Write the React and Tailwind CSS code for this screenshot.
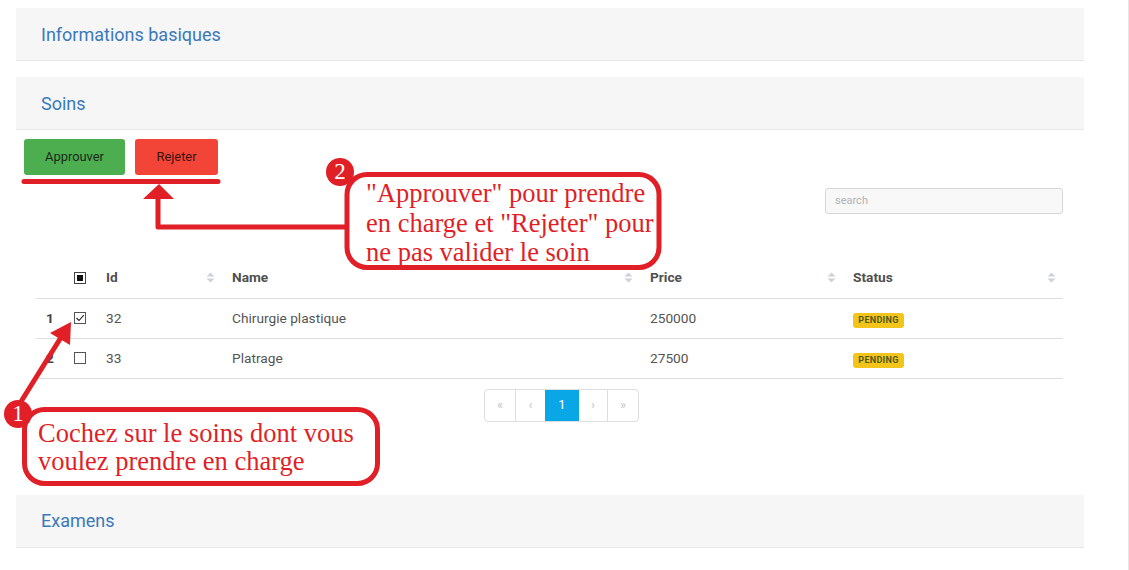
import React from "react";

const RED = "#e01f27";

function Sort() {
  return (
    <svg width="9" height="11" viewBox="0 0 9 11" className="shrink-0">
      <path d="M4.5 0.5 L8.5 4.5 L0.5 4.5 Z" fill="#cfd1da" />
      <path d="M4.5 10.5 L8.5 6.5 L0.5 6.5 Z" fill="#cfd1da" />
    </svg>
  );
}

function Panel({ title, className = "" }) {
  return (
    <div
      className={`h-[53px] bg-[#f6f6f6] border-b border-[#e8e8e8] flex items-center pl-[25px] text-[18px] text-[#3a79ba] ${className}`}
    >
      {title}
    </div>
  );
}

function Badge() {
  return (
    <span className="inline-flex items-center justify-center h-[15px] w-[51px] rounded-[3px] bg-[#f3c51a] text-[9px] font-bold tracking-[0.3px] text-[#4f5a1e]">
      PENDING
    </span>
  );
}

function HeadCell({ label, width, sort = true }) {
  return (
    <th className={`${width} p-0 font-bold text-left`}>
      <div className="flex items-center justify-between pl-[10px] pr-[7px]">
        <span>{label}</span>
        {sort && <Sort />}
      </div>
    </th>
  );
}

export default function App() {
  const rows = [
    { n: "1", id: "32", name: "Chirurgie plastique", price: "250000", checked: true },
    { n: "2", id: "33", name: "Platrage", price: "27500", checked: false },
  ];
  return (
    <div className="relative w-[1129px] h-[570px] bg-white border-r border-[#e6e6e6] overflow-hidden font-['Roboto',sans-serif]">
      <div className="pl-4 pt-2 w-[1084px]">
        <Panel title="Informations basiques" />
        <Panel title="Soins" className="mt-4" />
        <div className="pt-[9px]">
          <div className="flex gap-[10px] pl-2">
            <button className="h-[36px] w-[101px] rounded-[3px] bg-[#4cae4f] text-[12.9px] text-[#1b2a1b]">
              Approuver
            </button>
            <button className="h-[36px] w-[83px] rounded-[3px] bg-[#f24437] text-[12.9px] text-[#3a1411]">
              Rejeter
            </button>
          </div>
          <div className="pl-[20px] pr-[21px]">
            <div className="flex justify-end mt-[13px]">
              <div className="w-[238px] h-[26px] rounded-[3px] border border-[#d5d6d8] bg-[#f8f8f9] flex items-center pl-[9px] pt-[1px] text-[11px] text-[#b3b3b3]">
                search
              </div>
            </div>
            <table className="table-fixed border-collapse w-[1027px] mt-[44px] text-[13.7px] text-[#555]">
              <thead>
                <tr className="h-[40px] border-b border-[#dddddd] text-[#505050]">
                  <th className="w-[30px] p-0"></th>
                  <th className="w-[30px] p-0 text-left">
                    <div className="pl-[8px]">
                      <div className="w-[12px] h-[12px] border border-[#444] flex items-center justify-center">
                        <div className="w-[6px] h-[6px] bg-[#111]" />
                      </div>
                    </div>
                  </th>
                  <HeadCell label="Id" width="w-[126px]" />
                  <HeadCell label="Name" width="w-[418px]" />
                  <HeadCell label="Price" width="w-[203px]" />
                  <HeadCell label="Status" width="w-[220px]" />
                </tr>
              </thead>
              <tbody>
                {rows.map((r) => (
                  <tr key={r.id} className="h-[40px] border-b border-[#dddddd]">
                    <td className="p-0 pl-[10px] font-bold text-[#444]">{r.n}</td>
                    <td className="p-0 pl-[8px]">
                      <div className="w-[12px] h-[12px] border border-[#555] flex items-center justify-center">
                        {r.checked && (
                          <svg width="10" height="10" viewBox="0 0 10 10">
                            <path d="M1.5 5 L4 7.5 L8.8 2.2" fill="none" stroke="#222" strokeWidth="1.1" />
                          </svg>
                        )}
                      </div>
                    </td>
                    <td className="p-0 pl-[10px]">{r.id}</td>
                    <td className="p-0 pl-[10px]">{r.name}</td>
                    <td className="p-0 pl-[10px]">{r.price}</td>
                    <td className="p-0 pl-[10px]">
                      <Badge />
                    </td>
                  </tr>
                ))}
              </tbody>
            </table>
          </div>
          <div className="flex justify-center pl-[23px] mt-[10px]">
            <div className="flex h-[33px] border border-[#dedede] rounded-[4px] overflow-hidden text-[13px] text-[#c4c4c4]">
              <div className="w-[31px] flex items-center justify-center border-r border-[#dedede]">«</div>
              <div className="w-[29px] flex items-center justify-center">‹</div>
              <div className="w-[34px] flex items-center justify-center bg-[#0aa7e6] text-white">1</div>
              <div className="w-[29px] flex items-center justify-center border-r border-[#dedede]">›</div>
              <div className="w-[30px] flex items-center justify-center">»</div>
            </div>
          </div>
        </div>
        <Panel title="Examens" className="mt-[73px]" />
      </div>

      {/* Annotation overlay */}
      <svg
        className="absolute left-0 top-0 pointer-events-none"
        width="1129"
        height="570"
        viewBox="0 0 1129 570"
      >
        <line x1="24" y1="181.5" x2="218" y2="181.5" stroke={RED} strokeWidth="5" strokeLinecap="round" />
        <polyline points="345,227 158,227 158,197" fill="none" stroke={RED} strokeWidth="5" strokeLinejoin="round" />
        <polygon points="143,199 159,184 174,199" fill={RED} />
        <rect x="347" y="174.5" width="312" height="93" rx="20" fill="none" stroke={RED} strokeWidth="5" />
        <circle cx="340" cy="172" r="14" fill={RED} />
        <line x1="22" y1="400" x2="60" y2="339" stroke={RED} strokeWidth="5" strokeLinecap="round" />
        <polygon points="50,333 71,322 70,345" fill={RED} />
        <rect x="24.5" y="409.5" width="353" height="74" rx="20" fill="none" stroke={RED} strokeWidth="5" />
        <circle cx="18" cy="414" r="14" fill={RED} />
      </svg>
      <div className="absolute left-[330px] top-[157px] w-[20px] h-[30px] text-center text-white text-[23px] leading-[30px] font-['Liberation_Serif',serif]">
        2
      </div>
      <div className="absolute left-[8px] top-[399px] w-[20px] h-[30px] text-center text-white text-[23px] leading-[30px] font-['Liberation_Serif',serif]">
        1
      </div>
      <div
        className="absolute left-[366px] top-[179px] text-[26.5px] leading-[29.5px] whitespace-nowrap font-['Liberation_Serif',serif]"
        style={{ color: RED }}
      >
        <div>"Approuver" pour prendre</div>
        <div>en charge et "Rejeter" pour</div>
        <div>ne pas valider le soin</div>
      </div>
      <div
        className="absolute left-[38px] top-[419px] text-[26.5px] leading-[28px] whitespace-nowrap font-['Liberation_Serif',serif]"
        style={{ color: RED }}
      >
        <div>Cochez sur le soins dont vous</div>
        <div>voulez prendre en charge</div>
      </div>
    </div>
  );
}
